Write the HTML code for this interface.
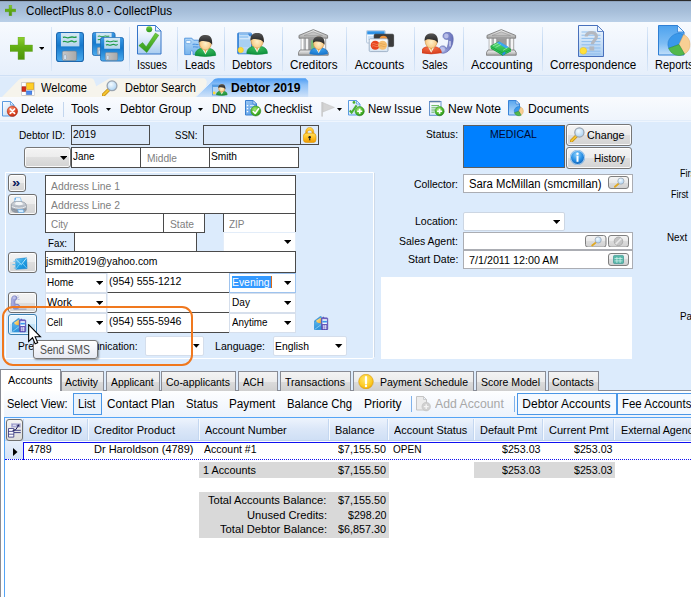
<!DOCTYPE html>
<html lang="en"><head><meta charset="utf-8"><title>CollectPlus 8.0 - CollectPlus</title>
<style>
html,body{margin:0;padding:0;}
body{width:691px;height:597px;overflow:hidden;position:relative;background:#fff;font-family:"Liberation Sans", sans-serif;}
#app{position:absolute;left:0;top:0;width:691px;height:597px;overflow:hidden;background:#fff;}
#app div,#app svg{position:absolute;box-sizing:border-box;}
.t{position:absolute;white-space:nowrap;line-height:normal;transform-origin:0 0;font-family:"Liberation Sans", sans-serif;}
</style></head>
<body><div id="app">
<div style="left:0px;top:0px;width:691px;height:22px;background:linear-gradient(#9cb4d1,#a6bed9 50%,#bad0e8);"></div>
<div style="left:0px;top:0px;width:691px;height:1px;background:#2a2a2a;"></div>
<div style="left:0px;top:1px;width:691px;height:1px;background:#6f7f96;opacity:.3"></div>
<svg style="left:5px;top:5px" width="10.8" height="10.8" viewBox="0 0 10.8 10.8"><defs><linearGradient id="g1" x1="0" y1="0" x2="0" y2="1"><stop offset="0" stop-color="#8ed030"/><stop offset="0.45" stop-color="#62ae14"/><stop offset="1" stop-color="#4c940a"/></linearGradient></defs><path d="M4.050000000000001 0H6.750000000000001V4.050000000000001H10.8V6.750000000000001H6.750000000000001V10.8H4.050000000000001V6.750000000000001H0V4.050000000000001H4.050000000000001Z" fill="url(#g1)" stroke="#5a9c1a" stroke-width="0.6" stroke-opacity=".6" stroke-linejoin="round"/></svg>
<span class="t" style="left:26.10px;top:4.00px;font-size:12px;color:#000;transform:scaleX(0.9686);">CollectPlus 8.0 - CollectPlus</span>
<div style="left:0px;top:22px;width:691px;height:53px;background:linear-gradient(#f7fafe,#eff5fd 45%,#e6effb);"></div>
<div style="left:0px;top:75px;width:691px;height:1px;background:#cfe0f5;"></div>
<div style="left:0px;top:76px;width:691px;height:1px;background:#e4eefb;"></div>
<svg style="left:10px;top:37px" width="22.5" height="22.5" viewBox="0 0 22.5 22.5"><defs><linearGradient id="g2" x1="0" y1="0" x2="0" y2="1"><stop offset="0" stop-color="#8ed030"/><stop offset="0.45" stop-color="#62ae14"/><stop offset="1" stop-color="#4c940a"/></linearGradient></defs><path d="M8.05 0H14.450000000000001V8.05H22.5V14.450000000000001H14.450000000000001V22.5H8.05V14.450000000000001H0V8.05H8.05Z" fill="url(#g2)" stroke="#5a9c1a" stroke-width="0.6" stroke-opacity=".6" stroke-linejoin="round"/></svg>
<svg style="left:38.8px;top:47px" width="5.6" height="3" viewBox="0 0 5.6 3"><path d="M0 0H5.6L2.8 3Z" fill="#000"/></svg>
<div style="left:51px;top:27px;width:1px;height:44px;background:linear-gradient(#dbe8f8,#bcd4f0 50%,#dbe8f8);"></div>
<div style="left:129px;top:27px;width:1px;height:44px;background:linear-gradient(#dbe8f8,#bcd4f0 50%,#dbe8f8);"></div>
<div style="left:177px;top:27px;width:1px;height:44px;background:linear-gradient(#dbe8f8,#bcd4f0 50%,#dbe8f8);"></div>
<div style="left:224px;top:27px;width:1px;height:44px;background:linear-gradient(#dbe8f8,#bcd4f0 50%,#dbe8f8);"></div>
<div style="left:282px;top:27px;width:1px;height:44px;background:linear-gradient(#dbe8f8,#bcd4f0 50%,#dbe8f8);"></div>
<div style="left:346px;top:27px;width:1px;height:44px;background:linear-gradient(#dbe8f8,#bcd4f0 50%,#dbe8f8);"></div>
<div style="left:414px;top:27px;width:1px;height:44px;background:linear-gradient(#dbe8f8,#bcd4f0 50%,#dbe8f8);"></div>
<div style="left:463px;top:27px;width:1px;height:44px;background:linear-gradient(#dbe8f8,#bcd4f0 50%,#dbe8f8);"></div>
<div style="left:542px;top:27px;width:1px;height:44px;background:linear-gradient(#dbe8f8,#bcd4f0 50%,#dbe8f8);"></div>
<div style="left:647px;top:27px;width:1px;height:44px;background:linear-gradient(#dbe8f8,#bcd4f0 50%,#dbe8f8);"></div>
<svg style="left:56px;top:32px" width="28" height="30" viewBox="0 0 28 30"><defs><linearGradient id="g3" x1="0" y1="0" x2="0" y2="1"><stop offset="0" stop-color="#3b9ae6"/><stop offset="0.45" stop-color="#1478cc"/><stop offset="1" stop-color="#4cacee"/></linearGradient><linearGradient id="g4" x1="0" y1="0" x2="0" y2="1"><stop offset="0" stop-color="#d6e8f4"/><stop offset="1" stop-color="#b6d6ec"/></linearGradient><linearGradient id="g5" x1="0" y1="0" x2="1" y2="0"><stop offset="0" stop-color="#c8c8c8"/><stop offset="1" stop-color="#a8a8a8"/></linearGradient></defs><g transform="scale(0.9824561403508771,1.0135135135135134)"><rect x=".5" y=".5" width="27.5" height="28.6" rx="2.8" fill="url(#g3)" stroke="#1a66ae" stroke-width="1"/><rect x="5" y="1" width="18.8" height="13.2" fill="url(#g4)"/><path d="M7 5.4q2-.8 3.5 0t3.500 0t3.500-.3t3.500-.3" stroke="#1e9a48" stroke-width="1.3" fill="none"/><path d="M7 9.6q2-.8 3.5 0t3.500-.2t3.500 0t3.500-.5" stroke="#1e9a48" stroke-width="1.3" fill="none"/><rect x="6.4" y="18.8" width="14.6" height="9.4" rx="1.6" fill="url(#g5)" stroke="#6f7f90" stroke-width=".6"/><rect x="8" y="22.4" width="2.5" height="4.8" rx="1" fill="#dceaf8" stroke="#7f93ad" stroke-width=".5"/></g></svg>
<svg style="left:92px;top:32px" width="23.5" height="24" viewBox="0 0 23.5 24"><defs><linearGradient id="g6" x1="0" y1="0" x2="0" y2="1"><stop offset="0" stop-color="#3b9ae6"/><stop offset="0.45" stop-color="#1478cc"/><stop offset="1" stop-color="#4cacee"/></linearGradient><linearGradient id="g7" x1="0" y1="0" x2="0" y2="1"><stop offset="0" stop-color="#d6e8f4"/><stop offset="1" stop-color="#b6d6ec"/></linearGradient><linearGradient id="g8" x1="0" y1="0" x2="1" y2="0"><stop offset="0" stop-color="#c8c8c8"/><stop offset="1" stop-color="#a8a8a8"/></linearGradient></defs><g transform="scale(0.8245614035087719,0.8108108108108107)"><rect x=".5" y=".5" width="27.5" height="28.6" rx="2.8" fill="url(#g6)" stroke="#1a66ae" stroke-width="1"/><rect x="5" y="1" width="18.8" height="13.2" fill="url(#g7)"/><path d="M7 5.4q2-.8 3.5 0t3.500 0t3.500-.3t3.500-.3" stroke="#1e9a48" stroke-width="1.3" fill="none"/><path d="M7 9.6q2-.8 3.5 0t3.500-.2t3.500 0t3.500-.5" stroke="#1e9a48" stroke-width="1.3" fill="none"/><rect x="6.4" y="18.8" width="14.6" height="9.4" rx="1.6" fill="url(#g8)" stroke="#6f7f90" stroke-width=".6"/><rect x="8" y="22.4" width="2.5" height="4.8" rx="1" fill="#dceaf8" stroke="#7f93ad" stroke-width=".5"/></g></svg>
<svg style="left:99.5px;top:37.3px" width="24" height="24.5" viewBox="0 0 24 24.5"><defs><linearGradient id="g9" x1="0" y1="0" x2="0" y2="1"><stop offset="0" stop-color="#3b9ae6"/><stop offset="0.45" stop-color="#1478cc"/><stop offset="1" stop-color="#4cacee"/></linearGradient><linearGradient id="g10" x1="0" y1="0" x2="0" y2="1"><stop offset="0" stop-color="#d6e8f4"/><stop offset="1" stop-color="#b6d6ec"/></linearGradient><linearGradient id="g11" x1="0" y1="0" x2="1" y2="0"><stop offset="0" stop-color="#c8c8c8"/><stop offset="1" stop-color="#a8a8a8"/></linearGradient></defs><g transform="scale(0.8421052631578947,0.8277027027027026)"><rect x=".5" y=".5" width="27.5" height="28.6" rx="2.8" fill="url(#g9)" stroke="#1a66ae" stroke-width="1"/><rect x="5" y="1" width="18.8" height="13.2" fill="url(#g10)"/><path d="M7 5.4q2-.8 3.5 0t3.500 0t3.500-.3t3.500-.3" stroke="#1e9a48" stroke-width="1.3" fill="none"/><path d="M7 9.6q2-.8 3.5 0t3.500-.2t3.500 0t3.500-.5" stroke="#1e9a48" stroke-width="1.3" fill="none"/><rect x="6.4" y="18.8" width="14.6" height="9.4" rx="1.6" fill="url(#g11)" stroke="#6f7f90" stroke-width=".6"/><rect x="8" y="22.4" width="2.5" height="4.8" rx="1" fill="#dceaf8" stroke="#7f93ad" stroke-width=".5"/></g></svg>
<svg style="left:137px;top:25px" width="24.5" height="29.5" viewBox="0 0 24.5 29.5"><defs><linearGradient id="g12" x1="0" y1="0" x2="0" y2="1"><stop offset="0" stop-color="#ffffff"/><stop offset="0.4" stop-color="#e4effb"/><stop offset="1" stop-color="#a8ccf0"/></linearGradient><linearGradient id="g13" x1="0" y1="0" x2="0" y2="1"><stop offset="0" stop-color="#72cc3c"/><stop offset="1" stop-color="#2c981c"/></linearGradient></defs><path d="M.5 .5H18.5L24.0 6V29.0H.5Z" fill="url(#g12)" stroke="#3474c8" stroke-width="1" stroke-linejoin="round"/><path d="M18.5 .5V6H24.0Z" fill="#eaf4ff" stroke="#3474c8" stroke-width=".8" stroke-linejoin="round"/><circle cx="12.2" cy="4.2" r="3" fill="url(#g13)"/><path d="M1.800 20.600L5.600 17.600L9.200 21.800L18.400 8L21.800 10.200L9.800 27.600Z" fill="url(#g13)" stroke="#2a8a1a" stroke-width=".4"/></svg>
<svg style="left:184px;top:34px" width="33" height="23" viewBox="0 0 33 23"><defs><linearGradient id="g14" x1="0" y1="0" x2="0" y2="1"><stop offset="0" stop-color="#b4d8f8"/><stop offset="1" stop-color="#78b4ec"/></linearGradient></defs><path d="M.7 4.2H7.8L9.6 6.2H16V20.6H9V17.4Q7.800 15.800 6.600 17.400V20.600H.700Z" fill="url(#g14)" stroke="#4a90dc" stroke-width=".9" stroke-linejoin="round"/><rect x="1.900" y="6.400" width="5" height="3.200" rx="1.200" fill="#f0f8ff" stroke="#5a9ce0" stroke-width=".7"/><path d="M8.600 10.400c2-.6 4 .4 6 0M9 13c2-.6 3.500 .4 5.500 0" stroke="#3c88dc" stroke-width=".9" fill="none"/><defs><radialGradient id="g15" cx="0.5" cy="0.55" r="0.6"><stop offset="0" stop-color="#fff0c8"/><stop offset="0.6" stop-color="#fad294"/><stop offset="1" stop-color="#e8aa58"/></radialGradient><radialGradient id="g16" cx="0.5" cy="0.2" r="0.9"><stop offset="0" stop-color="#3cc060"/><stop offset="1" stop-color="#0a8a38"/></radialGradient><linearGradient id="g17" x1="0" y1="0" x2="0" y2="1"><stop offset="0" stop-color="#555"/><stop offset="1" stop-color="#1c1c1c"/></linearGradient></defs><path d="M11.10 21.40C11.10 16.20 15.01 14.00 21.40 14.00C27.79 14.00 31.70 16.20 31.70 21.40Q21.40 23.60 11.10 21.40Z" fill="url(#g16)" stroke="#0a8a38" stroke-width=".6"/><path d="M18.00 14.40L21.40 20.60L24.80 14.40Z" fill="#f4f8f0"/><path d="M20.10 14.60L21.40 19.60L22.70 14.60Z" fill="#f4b050"/><ellipse cx="21.40" cy="8.80" rx="6.14" ry="7.30" fill="url(#g15)" stroke="#c88a40" stroke-width=".5"/><path d="M14.74 8.70C14.44 2.20 18.20 0.90 21.80 1.00C26.20 1.00 28.58 3.60 28.18 10.70C26.78 8.30 24.28 7.20 19.48 6.90C16.92 6.90 15.54 7.50 14.74 8.70Z" fill="url(#g17)"/></svg>
<svg style="left:237px;top:32px" width="32" height="24" viewBox="0 0 32 24"><defs><linearGradient id="g18" x1="0" y1="0" x2="0" y2="1"><stop offset="0" stop-color="#e4f0fc"/><stop offset="1" stop-color="#a4cef4"/></linearGradient></defs><rect x=".700" y="1" width="13.800" height="20.800" rx=".800" fill="url(#g18)" stroke="#3f88d8" stroke-width="1"/><rect x=".700" y="1" width="1.400" height="20.800" fill="#3f88d8"/><path d="M2.400 2.800h9M2.400 5h9" stroke="#6cb0ee" stroke-width="1.100"/><rect x="2.400" y="7.400" width="11" height="7.600" fill="#a8d0f2"/><path d="M11 1.400Q11.400 4.400 14.200 4.600V1.400Z" fill="#3f88d8"/><circle cx="3.700" cy="18" r="2.700" fill="#ffdc3c" stroke="#ecc020" stroke-width=".5"/><defs><radialGradient id="g19" cx="0.5" cy="0.55" r="0.6"><stop offset="0" stop-color="#fff0c8"/><stop offset="0.6" stop-color="#fad294"/><stop offset="1" stop-color="#e8aa58"/></radialGradient><radialGradient id="g20" cx="0.5" cy="0.2" r="0.9"><stop offset="0" stop-color="#3cc060"/><stop offset="1" stop-color="#0a8a38"/></radialGradient><linearGradient id="g21" x1="0" y1="0" x2="0" y2="1"><stop offset="0" stop-color="#555"/><stop offset="1" stop-color="#1c1c1c"/></linearGradient></defs><path d="M9.80 21.40C9.80 16.20 13.71 14.00 20.10 14.00C26.49 14.00 30.40 16.20 30.40 21.40Q20.10 23.60 9.80 21.40Z" fill="url(#g20)" stroke="#0a8a38" stroke-width=".6"/><path d="M16.70 14.40L20.10 20.60L23.50 14.40Z" fill="#f4f8f0"/><path d="M18.80 14.60L20.10 19.60L21.40 14.60Z" fill="#f4b050"/><ellipse cx="20.10" cy="8.80" rx="6.14" ry="7.30" fill="url(#g19)" stroke="#c88a40" stroke-width=".5"/><path d="M13.44 8.70C13.14 2.20 16.90 0.90 20.50 1.00C24.90 1.00 27.28 3.60 26.88 10.70C25.48 8.30 22.98 7.20 18.18 6.90C15.62 6.90 14.24 7.50 13.44 8.70Z" fill="url(#g21)"/></svg>
<svg style="left:298px;top:28.5px" width="31" height="27.5" viewBox="0 0 31 27.5"><defs><linearGradient id="g22" x1="0" y1="0" x2="0" y2="1"><stop offset="0" stop-color="#f2f2f2"/><stop offset="1" stop-color="#a8a8a8"/></linearGradient><linearGradient id="g23" x1="0" y1="0" x2="1" y2="0"><stop offset="0" stop-color="#e8e8e8"/><stop offset="0.5" stop-color="#ffffff"/><stop offset="1" stop-color="#b0b0b0"/></linearGradient></defs><path d="M15.3 .6L29.6 6.4V9.2H1V6.4Z" fill="url(#g22)" stroke="#7c7c7c" stroke-width=".9" stroke-linejoin="round"/><path d="M15.3 2.8L24.5 6.6H6.1Z" fill="#c4c4c4" stroke="#8c8c8c" stroke-width=".5"/><rect x="7.5" y="9.4" width="16" height="11.6" fill="#9a9a9a"/><rect x="3.0" y="9.4" width="3.3" height="11.8" fill="url(#g23)" stroke="#8a8a8a" stroke-width=".5"/><rect x="7.6" y="9.4" width="3.3" height="11.8" fill="url(#g23)" stroke="#8a8a8a" stroke-width=".5"/><rect x="20.2" y="9.4" width="3.3" height="11.8" fill="url(#g23)" stroke="#8a8a8a" stroke-width=".5"/><rect x="24.6" y="9.4" width="3.3" height="11.8" fill="url(#g23)" stroke="#8a8a8a" stroke-width=".5"/><path d="M2 21h26.6l1.6 2.6v2.6H.4v-2.6Z" fill="url(#g22)" stroke="#7c7c7c" stroke-width=".9" stroke-linejoin="round"/><rect x="13.200" y="11.400" width="3" height="9.600" fill="#78c078"/><defs><radialGradient id="g24" cx="0.5" cy="0.55" r="0.6"><stop offset="0" stop-color="#fff0c8"/><stop offset="0.6" stop-color="#fad294"/><stop offset="1" stop-color="#e8aa58"/></radialGradient><radialGradient id="g25" cx="0.5" cy="0.2" r="0.9"><stop offset="0" stop-color="#3ca4f0"/><stop offset="1" stop-color="#1470c8"/></radialGradient><linearGradient id="g26" x1="0" y1="0" x2="0" y2="1"><stop offset="0" stop-color="#555"/><stop offset="1" stop-color="#1c1c1c"/></linearGradient></defs><path d="M11.84 24.87C11.84 20.57 15.21 18.68 20.70 18.68C26.19 18.68 29.56 20.57 29.56 24.87Q20.70 26.76 11.84 24.87Z" fill="url(#g25)" stroke="#1470c8" stroke-width=".6"/><path d="M17.78 19.02L20.70 24.36L23.62 19.02Z" fill="#f4f8f0"/><path d="M19.58 19.20L20.70 23.50L21.82 19.20Z" fill="#f4b050"/><ellipse cx="20.70" cy="14.21" rx="5.28" ry="6.28" fill="url(#g24)" stroke="#c88a40" stroke-width=".5"/><path d="M14.98 14.12C14.72 8.53 17.95 7.41 21.04 7.50C24.83 7.50 26.88 9.74 26.53 15.84C25.33 13.78 23.18 12.83 19.05 12.57C16.85 12.57 15.66 13.09 14.98 14.12Z" fill="url(#g26)"/></svg>
<svg style="left:366px;top:30px" width="28.5" height="22.5" viewBox="0 0 28.5 22.5"><defs><linearGradient id="g27" x1="0" y1="0" x2="0" y2="1"><stop offset="0" stop-color="#ffffff"/><stop offset="1" stop-color="#d6e4f2"/></linearGradient></defs><rect x=".6" y=".4" width="18.6" height="12.6" rx="1" fill="#f4f9ff" stroke="#9fb6d0" stroke-width=".7"/><rect x="1.2" y="1.2" width="17.4" height="3.2" fill="#2f92e6"/><path d="M2 7h8M2 9h6" stroke="#9cc4ec" stroke-width=".9"/><rect x="8.2" y="4.2" width="19.4" height="12.4" rx="1.2" fill="#3c3c3c" stroke="#222" stroke-width=".6"/><circle cx="17.4" cy="9.8" r="4" fill="#f0923a"/><rect x="3.2" y="8.8" width="18.8" height="12.8" rx="1.2" fill="url(#g27)" stroke="#8fa4bc" stroke-width=".8"/><circle cx="9.2" cy="15.2" r="4.5" fill="#e8451e"/><circle cx="16.6" cy="15.2" r="4.5" fill="#f6bf72"/><path d="M6 14q1.6-1 3.200 0t3.200 0M6 16.200q1.600-1 3.200 0t3.200 0" stroke="#f8a080" stroke-width=".6" fill="none"/><path d="M13.400 14q1.600-1 3.200 0t3.200 0M13.400 16.200q1.600-1 3.200 0t3.200 0" stroke="#e09a40" stroke-width=".6" fill="none"/></svg>
<svg style="left:422px;top:31.5px" width="33" height="23" viewBox="0 0 33 23"><defs><linearGradient id="g28" x1="0" y1="0" x2="1" y2="0"><stop offset="0" stop-color="#a4aee0"/><stop offset="0.5" stop-color="#8c96d4"/><stop offset="1" stop-color="#6670b8"/></linearGradient></defs><path d="M23.600 .6C27.600 -.6 31.400 1.600 31.200 7.500C31 13.500 27.800 19.600 22.600 21C18.800 22 16.600 19.600 17 17.200C17.400 14.600 19.800 13.200 22.400 14.200C24.600 15.200 24.200 17.200 24.600 16.600C26 13.800 26.800 9.800 26.600 7C25.400 8 21.400 7.600 21 4.600C20.800 2.600 22 1 23.600 .6Z" fill="url(#g28)" stroke="#5660a8" stroke-width=".6"/><circle cx="24.400" cy="4" r="2.200" fill="#c4c8ec" opacity=".8"/><circle cx="20.600" cy="17.400" r="2.400" fill="#c4c8ec" opacity=".8"/><path d="M28 9.500V14" stroke="#dfe2f6" stroke-width="1.200" stroke-linecap="round"/><defs><radialGradient id="g29" cx="0.5" cy="0.55" r="0.6"><stop offset="0" stop-color="#fff0c8"/><stop offset="0.6" stop-color="#fad294"/><stop offset="1" stop-color="#e8aa58"/></radialGradient><radialGradient id="g30" cx="0.5" cy="0.2" r="0.9"><stop offset="0" stop-color="#f87048"/><stop offset="1" stop-color="#d03818"/></radialGradient><linearGradient id="g31" x1="0" y1="0" x2="0" y2="1"><stop offset="0" stop-color="#555"/><stop offset="1" stop-color="#1c1c1c"/></linearGradient></defs><path d="M-0.95 20.81C-0.95 16.47 2.91 14.30 9.20 14.30C15.49 14.30 19.35 16.47 19.35 20.81Q9.20 22.97 -0.95 20.81Z" fill="url(#g30)" stroke="#d03818" stroke-width=".6"/><path d="M5.85 14.70L9.20 20.81L12.55 14.70Z" fill="#f4f8f0"/><path d="M7.92 14.90L9.20 19.82L10.48 14.90Z" fill="#f4b050"/><ellipse cx="9.20" cy="9.18" rx="6.05" ry="7.19" fill="url(#g29)" stroke="#c88a40" stroke-width=".5"/><path d="M2.64 9.08C2.35 2.68 6.05 1.40 9.59 1.50C13.93 1.50 16.28 4.06 15.88 11.05C14.50 8.69 12.04 7.61 7.31 7.31C4.79 7.31 3.43 7.90 2.64 9.08Z" fill="url(#g31)"/></svg>
<svg style="left:486px;top:28.5px" width="31" height="27.5" viewBox="0 0 31 27.5"><defs><linearGradient id="g33" x1="0" y1="0" x2="0" y2="1"><stop offset="0" stop-color="#f2f2f2"/><stop offset="1" stop-color="#a8a8a8"/></linearGradient><linearGradient id="g34" x1="0" y1="0" x2="1" y2="0"><stop offset="0" stop-color="#e8e8e8"/><stop offset="0.5" stop-color="#ffffff"/><stop offset="1" stop-color="#b0b0b0"/></linearGradient></defs><path d="M15.3 .6L29.6 6.4V9.2H1V6.4Z" fill="url(#g33)" stroke="#7c7c7c" stroke-width=".9" stroke-linejoin="round"/><path d="M15.3 2.8L24.5 6.6H6.1Z" fill="#c4c4c4" stroke="#8c8c8c" stroke-width=".5"/><rect x="7.5" y="9.4" width="16" height="11.6" fill="#9a9a9a"/><rect x="3.0" y="9.4" width="3.3" height="11.8" fill="url(#g34)" stroke="#8a8a8a" stroke-width=".5"/><rect x="7.6" y="9.4" width="3.3" height="11.8" fill="url(#g34)" stroke="#8a8a8a" stroke-width=".5"/><rect x="20.2" y="9.4" width="3.3" height="11.8" fill="url(#g34)" stroke="#8a8a8a" stroke-width=".5"/><rect x="24.6" y="9.4" width="3.3" height="11.8" fill="url(#g34)" stroke="#8a8a8a" stroke-width=".5"/><path d="M2 21h26.6l1.6 2.6v2.6H.4v-2.6Z" fill="url(#g33)" stroke="#7c7c7c" stroke-width=".9" stroke-linejoin="round"/><defs><linearGradient id="g32" x1="0" y1="0" x2="0" y2="1"><stop offset="0" stop-color="#58dc74"/><stop offset="1" stop-color="#14a83c"/></linearGradient></defs><path d="M4.600 17L12.600 12.800L25 20.200L16.600 26.400Z" fill="url(#g32)" stroke="#0f8c30" stroke-width=".5"/><path d="M4.600 17V19.400L16.600 26.400L25 22.400V20.200L16.600 24Z" fill="#12a03a"/><path d="M4.600 18.200L16.600 25.200L25 21.300" fill="none" stroke="#5ae07a" stroke-width=".5"/><path d="M10.800 13.800L13.400 12.600L22.600 18L20.200 19.600Z" fill="#3aa6f4"/><path d="M16.400 24L19.400 22.600V24.900L16.400 26.400Z" fill="#2a8ee4"/><path d="M7 16.800L12.400 14.200M9.500 18.400L14.800 15.600M17 21.400L21.500 18.800" stroke="#b8f4c4" stroke-width=".6"/></svg>
<svg style="left:578px;top:25px" width="26" height="32" viewBox="0 0 26 32"><defs><linearGradient id="g35" x1="0" y1="0" x2="0" y2="1"><stop offset="0" stop-color="#f2f8fe"/><stop offset="1" stop-color="#a9cdf2"/></linearGradient></defs><path d="M.5 .5H19.5L25.5 6.5V31.5H.5Z" fill="url(#g35)" stroke="#4870bc" stroke-width="1" stroke-linejoin="round"/><path d="M19.5 .5V6.5H25.5Z" fill="#eaf4ff" stroke="#4870bc" stroke-width=".8" stroke-linejoin="round"/><path d="M3.500 7H18M3.500 10.200H22.500M3.500 13.400H22.500M3.500 16.600H22.500M3.500 19.800H22.500M3.500 23H22.500M3.500 26.200H22.500M3.500 29H22.500" stroke="#8fbdec" stroke-width="1"/><path d="M8.200 11.400C8.200 6.400 18.400 6.400 18.400 11.600C18.400 15.200 14.400 15.400 14.400 19.200" stroke="#b4b8c0" stroke-width="3.200" fill="none"/><rect x="11.400" y="21.400" width="4.800" height="4.200" fill="#b4b8c0"/><circle cx="5.300" cy="25.800" r="3.400" fill="#ffe03a" stroke="#e8c020" stroke-width=".5"/></svg>
<svg style="left:658px;top:25px" width="33" height="32" viewBox="0 0 33 32"><defs><linearGradient id="g36" x1="0" y1="0" x2="0" y2="1"><stop offset="0" stop-color="#4da2ee"/><stop offset="0.6" stop-color="#7cbcf4"/><stop offset="1" stop-color="#c2dffa"/></linearGradient></defs><path d="M.5 .5H19.5L26.0 7V30.0H.5Z" fill="url(#g36)" stroke="#2f7fd4" stroke-width="1" stroke-linejoin="round"/><path d="M19.5 .5V7H26.0Z" fill="#eaf4ff" stroke="#2f7fd4" stroke-width=".8" stroke-linejoin="round"/><path d="M21 19.5L10.66 23.26A11 11 0 0 1 25.65 9.53Z" fill="#3a98ea" stroke="#1f78cc" stroke-width=".5"/><path d="M21 19.5L25.65 9.53A11 11 0 0 1 26.50 29.03Z" fill="#f8cf94" stroke="#e0a860" stroke-width=".5"/><path d="M21 19.5L26.50 29.03A11 11 0 0 1 10.66 23.26Z" fill="#52b84c" stroke="#2c8c30" stroke-width=".5"/></svg>
<span class="t" style="left:136.60px;top:58.00px;font-size:12px;color:#000;transform:scaleX(0.8650);">Issues</span>
<span class="t" style="left:184.60px;top:58.00px;font-size:12px;color:#000;transform:scaleX(0.9176);">Leads</span>
<span class="t" style="left:231.85px;top:58.00px;font-size:12px;color:#000;transform:scaleX(0.9520);">Debtors</span>
<span class="t" style="left:289.60px;top:58.00px;font-size:12px;color:#000;transform:scaleX(0.9758);">Creditors</span>
<span class="t" style="left:354.85px;top:58.00px;font-size:12px;color:#000;">Accounts</span>
<span class="t" style="left:421.85px;top:58.00px;font-size:12px;color:#000;transform:scaleX(0.8495);">Sales</span>
<span class="t" style="left:470.60px;top:58.00px;font-size:12px;color:#000;transform:scaleX(1.0400);">Accounting</span>
<span class="t" style="left:550.35px;top:58.00px;font-size:12px;color:#000;transform:scaleX(0.9721);">Correspondence</span>
<span class="t" style="left:654.85px;top:58.00px;font-size:12px;color:#000;transform:scaleX(0.9163);">Reports</span>
<div style="left:0px;top:77px;width:691px;height:20px;background:#ddebfb;"></div>
<svg style="left:0;top:77px" width="330" height="20" viewBox="0 77 330 20"><defs><linearGradient id="seltab" x1="0" y1="0" x2="0" y2="1"><stop offset="0" stop-color="#4c9df5"/><stop offset=".35" stop-color="#8dc0f7"/><stop offset="1" stop-color="#cfe2f9"/></linearGradient></defs><path d="M2 97 L18.5 80 Q20 78.3 23 78.3 L91 78.3 Q93.4 78.3 94.2 80.5 L96.4 86.5 L100 97 Z" fill="#f6f4ec"/><path d="M90 97 L96.2 86.2 L108 79.3 Q109.600 78.3 112 78.3 L204 78.3 Q206 78.6 206.800 81.5 L205 97 Z" fill="#f6f4ec"/><path d="M195.5 97 L213 80 Q214.800 78.3 218 78.3 L305.600 78.3 L308.200 81 V97 Z" fill="url(#seltab)"/><path d="M196.200 96.500 L213.400 79.800" stroke="#eef6ff" stroke-width="1" fill="none" opacity=".8"/></svg>
<svg style="left:20.5px;top:81.5px" width="14" height="14" viewBox="0 0 14 14"><rect x=".3" y=".3" width="13.400" height="13.200" rx="1" fill="#e4e4e4" stroke="#b8b8b8" stroke-width=".6"/><rect x="1" y="1" width="3.400" height="3.200" fill="#fff"/><rect x="1" y="10" width="3.400" height="3" fill="#fff"/><rect x="11" y="9.500" width="2.200" height="3.400" fill="#fff"/><rect x="5.700" y="1" width="7" height="6.400" fill="#ffcf24" stroke="#d89a10" stroke-width=".6"/><rect x="1" y="4.800" width="3.800" height="4.600" fill="#d42a1a" stroke="#a01808" stroke-width=".5"/><rect x="5.600" y="9" width="5.200" height="3.400" fill="#4a8af0" stroke="#2a62c8" stroke-width=".5"/></svg>
<svg style="left:101.6px;top:79.6px" width="16" height="16" viewBox="0 0 16 16"><defs><radialGradient id="g37" cx="0.4" cy="0.35" r="0.7"><stop offset="0" stop-color="#f4fbff"/><stop offset="1" stop-color="#a8d0f2"/></radialGradient></defs><g transform="scale(1.0)"><path d="M7.200 9.200L1.600 14.800" stroke="#c08a10" stroke-width="3.600" stroke-linecap="round"/><path d="M7.200 9.200L1.600 14.800" stroke="#f4c430" stroke-width="2.200" stroke-linecap="round"/><circle cx="10" cy="5.800" r="4.900" fill="url(#g37)" stroke="#9aa4b0" stroke-width="1.300"/></g></svg>
<svg style="left:212px;top:83.5px" width="16" height="12" viewBox="0 0 16 12"><rect x=".4" y="1" width="7" height="10" fill="#b4d6f6" stroke="#4a90d8" stroke-width=".7"/><rect x=".8" y="1.300" width="6.200" height="1.500" fill="#3d8fe0"/><circle cx="2.200" cy="9" r="1.400" fill="#ffd93a"/><defs><radialGradient id="g38" cx="0.5" cy="0.55" r="0.6"><stop offset="0" stop-color="#fff0c8"/><stop offset="0.6" stop-color="#fad294"/><stop offset="1" stop-color="#e8aa58"/></radialGradient><radialGradient id="g39" cx="0.5" cy="0.2" r="0.9"><stop offset="0" stop-color="#3fb050"/><stop offset="1" stop-color="#1f8a35"/></radialGradient><linearGradient id="g40" x1="0" y1="0" x2="0" y2="1"><stop offset="0" stop-color="#555"/><stop offset="1" stop-color="#1c1c1c"/></linearGradient></defs><path d="M4.44 10.81C4.44 8.10 6.48 6.96 9.80 6.96C13.12 6.96 15.16 8.10 15.16 10.81Q9.80 11.95 4.44 10.81Z" fill="url(#g39)" stroke="#1f8a35" stroke-width=".6"/><path d="M8.03 7.17L9.80 10.39L11.57 7.17Z" fill="#f4f8f0"/><path d="M9.12 7.27L9.80 9.87L10.48 7.27Z" fill="#f4b050"/><ellipse cx="9.80" cy="4.26" rx="3.19" ry="3.80" fill="url(#g38)" stroke="#c88a40" stroke-width=".5"/><path d="M6.34 4.20C6.18 0.82 8.14 0.15 10.01 0.20C12.30 0.20 13.54 1.55 13.33 5.24C12.60 4.00 11.30 3.42 8.80 3.27C7.47 3.27 6.75 3.58 6.34 4.20Z" fill="url(#g40)"/></svg>
<span class="t" style="left:40.60px;top:80.50px;font-size:12px;color:#000;transform:scaleX(0.9238);">Welcome</span>
<span class="t" style="left:125.10px;top:80.50px;font-size:12px;color:#000;transform:scaleX(0.9150);">Debtor Search</span>
<span class="t" style="left:231.40px;top:80.60px;font-size:12px;color:#000;font-weight:bold;transform:scaleX(1.0103);">Debtor 2019</span>
<div style="left:0px;top:97px;width:691px;height:24px;background:linear-gradient(#f9fbfe,#eef4fc);"></div>
<div style="left:0px;top:120px;width:691px;height:1px;background:#e2edfa;"></div>
<svg style="left:2px;top:101px" width="16.5" height="16.5" viewBox="0 0 16.5 16.5"><defs><linearGradient id="g41" x1="0" y1="0" x2="1" y2="1"><stop offset="0" stop-color="#ffffff"/><stop offset="1" stop-color="#b4d4f4"/></linearGradient></defs><path d="M.5 .5H8.5L12.0 4V15.0H.5Z" fill="url(#g41)" stroke="#5a9ae0" stroke-width="1" stroke-linejoin="round"/><path d="M8.5 .5V4H12.0Z" fill="#eaf4ff" stroke="#5a9ae0" stroke-width=".8" stroke-linejoin="round"/><defs><radialGradient id="g42" cx="0.4" cy="0.35" r="0.7"><stop offset="0" stop-color="#f8a080"/><stop offset="0.6" stop-color="#e04a28"/><stop offset="1" stop-color="#b82a10"/></radialGradient></defs><circle cx="10.4" cy="10.2" r="5.2" fill="url(#g42)" stroke="#a83018" stroke-width=".5"/><path d="M8.216000000000001 8.015999999999998L12.584 12.384M12.584 8.015999999999998L8.216000000000001 12.384" stroke="#fff" stroke-width="1.700" stroke-linecap="round"/></svg>
<span class="t" style="left:21.20px;top:101.80px;font-size:12px;color:#000;transform:scaleX(0.9398);">Delete</span>
<div style="left:63px;top:102px;width:1px;height:15px;background:#c3d6ee;"></div>
<span class="t" style="left:71.10px;top:101.80px;font-size:12px;color:#000;transform:scaleX(0.9924);">Tools</span>
<svg style="left:106.3px;top:108px" width="5" height="3" viewBox="0 0 5 3"><path d="M0 0H5L2.5 3Z" fill="#000"/></svg>
<span class="t" style="left:120.10px;top:101.80px;font-size:12px;color:#000;transform:scaleX(0.9835);">Debtor Group</span>
<svg style="left:198px;top:108px" width="5" height="3" viewBox="0 0 5 3"><path d="M0 0H5L2.5 3Z" fill="#000"/></svg>
<span class="t" style="left:211.60px;top:101.80px;font-size:12px;color:#000;transform:scaleX(0.9231);">DND</span>
<svg style="left:245px;top:100px" width="16.5" height="16.5" viewBox="0 0 16.5 16.5"><defs><linearGradient id="g43" x1="0" y1="0" x2="1" y2="1"><stop offset="0" stop-color="#9cc8f4"/><stop offset="1" stop-color="#4a94e4"/></linearGradient></defs><path d="M.5 .5H8L11.5 4V15.0H.5Z" fill="url(#g43)" stroke="#3a80d0" stroke-width="1" stroke-linejoin="round"/><path d="M8 .5V4H11.5Z" fill="#eaf4ff" stroke="#3a80d0" stroke-width=".8" stroke-linejoin="round"/><path d="M2.500 5v1.200M2.500 8v1.200M2.500 11v1.200" stroke="#fff" stroke-width="1.400"/><path d="M5 5.600h4M5 8.600h3" stroke="#e4f0fc" stroke-width=".9"/><defs><radialGradient id="g44" cx="0.4" cy="0.35" r="0.7"><stop offset="0" stop-color="#a8e878"/><stop offset="0.6" stop-color="#4cb82c"/><stop offset="1" stop-color="#2a8a18"/></radialGradient></defs><circle cx="10.8" cy="11" r="5" fill="url(#g44)" stroke="#2f8a20" stroke-width=".5"/><path d="M8.3 11.5L10.200000000000001 13.5L13.55 8.75" stroke="#fff" stroke-width="1.600" fill="none" stroke-linecap="round" stroke-linejoin="round"/></svg>
<span class="t" style="left:263.60px;top:101.80px;font-size:12px;color:#000;transform:scaleX(0.9860);">Checklist</span>
<svg style="left:321px;top:102px" width="14" height="15" viewBox="0 0 14 15"><rect x=".4" y="0" width="1.400" height="14.600" fill="#c4c4c4"/><path d="M1.800 .6L13.400 5.400L1.800 10Z" fill="#d4d4d4" stroke="#c0c0c0" stroke-width=".5"/></svg>
<svg style="left:336.5px;top:108px" width="5" height="3" viewBox="0 0 5 3"><path d="M0 0H5L2.5 3Z" fill="#000"/></svg>
<svg style="left:348px;top:100px" width="17" height="16.5" viewBox="0 0 17 16.5"><defs><linearGradient id="g45" x1="0" y1="0" x2="1" y2="1"><stop offset="0" stop-color="#ffffff"/><stop offset="1" stop-color="#b8d8f6"/></linearGradient></defs><path d="M.5 .5H8.5L12.0 4V15.0H.5Z" fill="url(#g45)" stroke="#5a9ae0" stroke-width="1" stroke-linejoin="round"/><path d="M8.5 .5V4H12.0Z" fill="#eaf4ff" stroke="#5a9ae0" stroke-width=".8" stroke-linejoin="round"/><circle cx="6" cy="2.400" r="1.400" fill="#48b030"/><path d="M1.800 10.500L3.600 12.600L8.600 5.400" stroke="#48b030" stroke-width="2" fill="none"/><defs><radialGradient id="g46" cx="0.4" cy="0.35" r="0.7"><stop offset="0" stop-color="#a8e878"/><stop offset="0.6" stop-color="#4cb82c"/><stop offset="1" stop-color="#2a8a18"/></radialGradient></defs><circle cx="11.7" cy="11.2" r="4.6" fill="url(#g46)" stroke="#2f8a20" stroke-width=".5"/><path d="M9.17 11.2H14.229999999999999M11.7 8.67V13.729999999999999" stroke="#fff" stroke-width="1.600"/></svg>
<span class="t" style="left:367.60px;top:101.80px;font-size:12px;color:#000;transform:scaleX(0.9550);">New Issue</span>
<svg style="left:429px;top:100px" width="16" height="16.5" viewBox="0 0 16 16.5"><defs><linearGradient id="g47" x1="0" y1="0" x2="0" y2="1"><stop offset="0" stop-color="#ffffff"/><stop offset="1" stop-color="#d4e6f8"/></linearGradient></defs><rect x=".5" y="1.500" width="11.500" height="13.800" fill="url(#g47)" stroke="#5a8ac8" stroke-width=".9"/><path d="M2 .6v2M4 .6v2M6 .6v2M8 .6v2M10 .6v2" stroke="#4a5a70" stroke-width=".8"/><path d="M2.400 5.600h7.600M2.400 7.800h7.600M2.400 10h4M2.400 12.200h3" stroke="#58b048" stroke-width=".9"/><defs><radialGradient id="g48" cx="0.4" cy="0.35" r="0.7"><stop offset="0" stop-color="#a8e878"/><stop offset="0.6" stop-color="#4cb82c"/><stop offset="1" stop-color="#2a8a18"/></radialGradient></defs><circle cx="10.6" cy="11.2" r="4.6" fill="url(#g48)" stroke="#2f8a20" stroke-width=".5"/><path d="M8.07 11.2H13.129999999999999M10.6 8.67V13.729999999999999" stroke="#fff" stroke-width="1.600"/></svg>
<span class="t" style="left:447.60px;top:101.80px;font-size:12px;color:#000;transform:scaleX(1.0059);">New Note</span>
<svg style="left:508px;top:100px" width="16" height="16.5" viewBox="0 0 16 16.5"><defs><linearGradient id="g49" x1="0" y1="0" x2="0" y2="1"><stop offset="0" stop-color="#58a6ee"/><stop offset="1" stop-color="#bcdcfa"/></linearGradient></defs><path d="M.5 .5H8L11.5 4V15.0H.5Z" fill="url(#g49)" stroke="#3a84d8" stroke-width="1" stroke-linejoin="round"/><path d="M8 .5V4H11.5Z" fill="#eaf4ff" stroke="#3a84d8" stroke-width=".8" stroke-linejoin="round"/><path d="M10.8 11.2L6.48 12.77A4.6 4.6 0 0 1 12.74 7.03Z" fill="#3a98ea" stroke="#1f78cc" stroke-width=".5"/><path d="M10.8 11.2L12.74 7.03A4.6 4.6 0 0 1 13.10 15.18Z" fill="#f8cf94" stroke="#e0a860" stroke-width=".5"/><path d="M10.8 11.2L13.10 15.18A4.6 4.6 0 0 1 6.48 12.77Z" fill="#52b84c" stroke="#2c8c30" stroke-width=".5"/></svg>
<span class="t" style="left:527.60px;top:101.80px;font-size:12px;color:#000;transform:scaleX(1.0051);">Documents</span>
<div style="left:0px;top:121px;width:691px;height:270px;background:#dcebfc;"></div>
<div style="left:0px;top:121px;width:691px;height:1px;background:#eef5fe;"></div>
<span class="t" style="left:19.10px;top:128.75px;font-size:11.5px;color:#000;transform:scaleX(0.8777);">Debtor ID:</span>
<div style="left:71px;top:125px;width:79px;height:20px;background:#dbe9fa;border:1px solid #4a4a4a;"></div>
<span class="t" style="left:72.60px;top:128.00px;font-size:11.5px;color:#000;transform:scaleX(0.8990);">2019</span>
<span class="t" style="left:174.60px;top:128.75px;font-size:11.5px;color:#000;transform:scaleX(0.8383);">SSN:</span>
<div style="left:203px;top:125px;width:98px;height:20px;background:#dbe9fa;border:1px solid #4a4a4a;"></div>
<div style="left:300px;top:125px;width:19px;height:20px;background:#dcebfc;border:1px solid #4a4a4a;"></div>
<svg style="left:303px;top:127px" width="13.5" height="16" viewBox="0 0 13.5 16"><defs><linearGradient id="g50" x1="0" y1="0" x2="0" y2="1"><stop offset="0" stop-color="#ffe060"/><stop offset="0.5" stop-color="#ffc020"/><stop offset="1" stop-color="#ee9800"/></linearGradient></defs><path d="M2.600 6.800V5.200C2.600 -1.200 10.800 -1.200 10.800 5.200V6.800H9V5.400C9 2.600 4.400 2.600 4.400 5.400V6.800Z" fill="url(#g50)" stroke="#d89000" stroke-width=".5"/><rect x=".4" y="6.200" width="12.600" height="9.400" rx="3" fill="url(#g50)" stroke="#dc9400" stroke-width=".6"/><circle cx="6.700" cy="10.200" r="1.300" fill="#222"/><path d="M6.700 10.200L5.900 13.200H7.500Z" fill="#222"/></svg>
<div style="left:24px;top:147px;width:47px;height:21px;background:linear-gradient(#f4f4f4,#ececec 50%,#dfdfdf 50%,#d3d3d3);border:1px solid #777;border-radius:3px;box-shadow:inset 0 0 0 1px rgba(255,255,255,.85);"></div>
<svg style="left:59.8px;top:155.8px" width="7.4" height="4" viewBox="0 0 7.4 4"><path d="M0 0H7.4L3.7 4Z" fill="#000"/></svg>
<div style="left:71px;top:147px;width:70px;height:20.5px;background:#fff;border:1px solid #4a4a4a;"></div>
<span class="t" style="left:72.60px;top:150.00px;font-size:11.5px;color:#000;transform:scaleX(0.8622);">Jane</span>
<div style="left:140px;top:147px;width:69.5px;height:20.5px;background:#fff;border:1px solid #4a4a4a;"></div>
<span class="t" style="left:147.30px;top:152.30px;font-size:11.5px;color:#808080;transform:scaleX(0.8856);">Middle</span>
<div style="left:208.5px;top:147px;width:90px;height:20.5px;background:#fff;border:1px solid #4a4a4a;"></div>
<span class="t" style="left:210.60px;top:150.00px;font-size:11.5px;color:#000;transform:scaleX(0.8845);">Smith</span>
<div style="left:5px;top:172px;width:369px;height:187px;background:#dcebfc;border:1px solid #fff;border-radius:0 0 2px 0;"></div>
<div style="left:374px;top:173px;width:1px;height:184px;background:#cddaea;"></div>
<div style="left:8px;top:174px;width:18px;height:18px;background:linear-gradient(#f3f3f3,#ececec 50%,#dedede 50%,#d4d4d4);border:1px solid #6e6e6e;border-radius:3px;box-shadow:inset 0 0 0 1px rgba(255,255,255,.85);"></div>
<span class="t" style="left:12.40px;top:176.00px;font-size:12px;color:#0c1c5c;font-weight:bold;transform:scaleX(1.2287);">»</span>
<div style="left:8px;top:194px;width:29px;height:21px;background:linear-gradient(#f3f3f3,#ececec 50%,#dedede 50%,#d4d4d4);border:1px solid #6e6e6e;border-radius:3px;box-shadow:inset 0 0 0 1px rgba(255,255,255,.85);"></div>
<svg style="left:10.5px;top:196.5px" width="16" height="16.5" viewBox="0 0 16 16.5"><defs><linearGradient id="g51" x1="0" y1="0" x2="0" y2="1"><stop offset="0" stop-color="#d4d8de"/><stop offset="1" stop-color="#8e96a2"/></linearGradient><linearGradient id="g52" x1="0" y1="0" x2="0" y2="1"><stop offset="0" stop-color="#ffffff"/><stop offset="1" stop-color="#cfe6fa"/></linearGradient></defs><path d="M3.200 6.200L4.200 .700H9.400L11 6.200Z" fill="url(#g52)" stroke="#7ab8ec" stroke-width=".7"/><circle cx="4.300" cy="1.900" r=".7" fill="#2a8ae0"/><path d="M.5 7.600C.5 6 2.500 4.800 4 4.600L10.500 4.600C13 5 15.300 6.400 15.300 8.200V12.800C15.300 13.800 13.500 15.200 11.500 15.400H4.500C2.500 15.200 .5 13.800 .5 12.800Z" fill="url(#g51)" stroke="#7e8692" stroke-width=".6"/><path d="M3.600 7.200L5.200 5H10L12.400 7.200Q8 9.400 3.600 7.200Z" fill="#f4f6f8"/><path d="M.8 9.600Q8 12.800 15 9.600" stroke="#eceff3" stroke-width="1" fill="none"/><path d="M.8 11.800Q8 15 15 11.800" stroke="#747c88" stroke-width=".6" fill="none"/><path d="M6.600 12.600H12.200L13 15.600H7.600Z" fill="#d4ecfe" stroke="#58a8ec" stroke-width=".6"/></svg>
<div style="left:44.5px;top:175px;width:251.5px;height:20px;background:#fff;border:1px solid #4a4a4a;"></div>
<span class="t" style="left:50.60px;top:180.00px;font-size:11.5px;color:#808080;transform:scaleX(0.8994);">Address Line 1</span>
<div style="left:44.5px;top:194px;width:251.5px;height:20px;background:#fff;border:1px solid #4a4a4a;"></div>
<span class="t" style="left:50.60px;top:199.00px;font-size:11.5px;color:#808080;transform:scaleX(0.8994);">Address Line 2</span>
<div style="left:44.5px;top:213px;width:119.5px;height:20px;background:#fff;border:1px solid #4a4a4a;"></div>
<span class="t" style="left:50.60px;top:218.00px;font-size:11.5px;color:#808080;transform:scaleX(0.8584);">City</span>
<div style="left:163px;top:213px;width:42px;height:20px;background:#fff;border:1px solid #4a4a4a;"></div>
<span class="t" style="left:169.60px;top:218.00px;font-size:11.5px;color:#808080;transform:scaleX(0.8938);">State</span>
<div style="left:222.5px;top:213px;width:73.5px;height:19px;background:#fff;border:1px solid #4a4a4a;border-bottom:none;"></div>
<span class="t" style="left:228.60px;top:218.00px;font-size:11.5px;color:#808080;transform:scaleX(0.8664);">ZIP</span>
<span class="t" style="left:47.60px;top:237.00px;font-size:11.5px;color:#000;transform:scaleX(0.8495);">Fax:</span>
<div style="left:74px;top:233px;width:123px;height:19px;background:#fff;border:1px solid #4a4a4a;border-top:none;border-bottom:none"></div>
<div style="left:222.5px;top:231.5px;width:73.5px;height:20px;background:#fff;border:1px solid #e3edf9;"></div>
<svg style="left:283.5px;top:240.3px" width="7.4" height="4" viewBox="0 0 7.4 4"><path d="M0 0H7.4L3.7 4Z" fill="#000"/></svg>
<div style="left:8px;top:252px;width:29px;height:21px;background:linear-gradient(#f3f3f3,#ececec 50%,#dedede 50%,#d4d4d4);border:1px solid #6e6e6e;border-radius:3px;box-shadow:inset 0 0 0 1px rgba(255,255,255,.85);"></div>
<svg style="left:11.5px;top:257px" width="16" height="13" viewBox="0 0 16 13"><defs><linearGradient id="g53" x1="0" y1="0" x2="1" y2="1"><stop offset="0" stop-color="#7fd0f8"/><stop offset="0.5" stop-color="#22a0e4"/><stop offset="1" stop-color="#0c84d4"/></linearGradient></defs><path d="M3.700 2.100L14.600 .8L15.100 11.500L3.900 12.300Z" fill="url(#g53)" stroke="#0c7cc8" stroke-width=".5"/><path d="M3.900 2.300L9.300 7.600L14.500 1" fill="none" stroke="#c4ecff" stroke-width=".9"/><path d="M4 12L8 6.600M14.900 11.300L10.600 6.400" fill="none" stroke="#8cd8fc" stroke-width=".7"/><path d="M1.400 4.300H3.600M.5 7.600H3.600M1.800 11H3.800" stroke="#6cc0f0" stroke-width="1"/></svg>
<div style="left:44.5px;top:251px;width:251.5px;height:22px;background:#fff;border:1px solid #4a4a4a;"></div>
<span class="t" style="left:46.40px;top:255.00px;font-size:11.5px;color:#000;transform:scaleX(0.9025);">jsmith2019@yahoo.com</span>
<div style="left:44.5px;top:272.5px;width:62.5px;height:20px;background:#fff;border:1px solid #d6dfec;"></div>
<span class="t" style="left:47.10px;top:275.70px;font-size:11.5px;color:#000;transform:scaleX(0.8639);">Home</span>
<svg style="left:96px;top:281.2px" width="7.2" height="4" viewBox="0 0 7.2 4"><path d="M0 0H7.2L3.6 4Z" fill="#000"/></svg>
<div style="left:106.5px;top:272.5px;width:123px;height:20.5px;background:#fff;border:1px solid #4a4a4a;border-left:1px solid #e6eef9;border-top:none;"></div>
<span class="t" style="left:108.60px;top:275.20px;font-size:11.5px;color:#000;transform:scaleX(0.9219);">(954) 555-1212</span>
<div style="left:229px;top:272.5px;width:67px;height:20px;background:#fff;border:1px solid #9ec3ee;"></div>
<div style="left:232px;top:275.8px;width:39px;height:12px;background:#3399ff;"></div>
<span class="t" style="left:232.10px;top:275.50px;font-size:11.5px;color:#fff;transform:scaleX(0.9023);">Evening</span>
<div style="left:271px;top:275.8px;width:1px;height:12px;background:#d86a1a;"></div>
<svg style="left:283.5px;top:281.2px" width="7.4" height="4" viewBox="0 0 7.4 4"><path d="M0 0H7.4L3.7 4Z" fill="#000"/></svg>
<div style="left:44.5px;top:292.5px;width:62.5px;height:20px;background:#fff;border:1px solid #d6dfec;"></div>
<span class="t" style="left:47.10px;top:295.70px;font-size:11.5px;color:#000;transform:scaleX(0.9391);">Work</span>
<svg style="left:96px;top:301.2px" width="7.2" height="4" viewBox="0 0 7.2 4"><path d="M0 0H7.2L3.6 4Z" fill="#000"/></svg>
<div style="left:106.5px;top:292.5px;width:123px;height:20.5px;background:#fff;border:1px solid #4a4a4a;border-left:1px solid #e6eef9;border-top:none;"></div>
<div style="left:229px;top:292.5px;width:67px;height:20px;background:#fff;border:1px solid #d6dfec;"></div>
<span class="t" style="left:232.10px;top:295.70px;font-size:11.5px;color:#000;transform:scaleX(0.8802);">Day</span>
<svg style="left:283.5px;top:301.2px" width="7.4" height="4" viewBox="0 0 7.4 4"><path d="M0 0H7.4L3.7 4Z" fill="#000"/></svg>
<div style="left:44.5px;top:312.5px;width:62.5px;height:20px;background:#fff;border:1px solid #d6dfec;"></div>
<span class="t" style="left:47.10px;top:315.70px;font-size:11.5px;color:#000;transform:scaleX(0.7824);">Cell</span>
<svg style="left:96px;top:321.2px" width="7.2" height="4" viewBox="0 0 7.2 4"><path d="M0 0H7.2L3.6 4Z" fill="#000"/></svg>
<div style="left:106.5px;top:312.5px;width:123px;height:20.5px;background:#fff;border:1px solid #4a4a4a;border-left:1px solid #e6eef9;border-top:none;"></div>
<span class="t" style="left:108.60px;top:315.20px;font-size:11.5px;color:#000;transform:scaleX(0.9219);">(954) 555-5946</span>
<div style="left:229px;top:312.5px;width:67px;height:20px;background:#fff;border:1px solid #d6dfec;"></div>
<span class="t" style="left:232.10px;top:315.70px;font-size:11.5px;color:#000;transform:scaleX(0.8546);">Anytime</span>
<svg style="left:283.5px;top:321.2px" width="7.4" height="4" viewBox="0 0 7.4 4"><path d="M0 0H7.4L3.7 4Z" fill="#000"/></svg>
<div style="left:8px;top:292px;width:29px;height:20.5px;background:linear-gradient(#f3f3f3,#ececec 50%,#dedede 50%,#d4d4d4);border:1px solid #6e6e6e;border-radius:3px;box-shadow:inset 0 0 0 1px rgba(255,255,255,.85);"></div>
<svg style="left:11px;top:295px" width="16" height="15.5" viewBox="0 0 16 15.5"><defs><linearGradient id="g54" x1="0" y1="0" x2="1" y2="0"><stop offset="0" stop-color="#b4b8e4"/><stop offset="0.5" stop-color="#8c92d2"/><stop offset="1" stop-color="#6c72b8"/></linearGradient></defs><path d="M1.600 1.400C3.200 .2 6 .6 6 2.800C6 4.400 5 5 4.200 5.400C3.800 6.800 4 8.400 4.600 9.400C6.200 8.800 8.400 9.400 8.600 11C8.800 13.200 6 14.400 3.600 14C.8 13.400 .2 10 .2 7C.2 4.600 .6 2.400 1.600 1.400Z" fill="url(#g54)" stroke="#6a70b4" stroke-width=".5"/><circle cx="3.400" cy="2.800" r="1.500" fill="#c8ccf0" opacity=".8"/><ellipse cx="6" cy="11.200" rx="1.800" ry="1.300" fill="#c8ccf0" opacity=".8"/><path d="M6.400 2.800L8.200 1.800M6.600 4.400L8.600 4.400M6 1.400L7.200 .2" stroke="#9aa0d4" stroke-width=".7"/><path d="M2.500 14.200H15.500" stroke="#9c9cb8" stroke-width="1.200" opacity=".8"/></svg>
<div style="left:8px;top:314px;width:29px;height:21px;background:linear-gradient(#e8f4fd,#dcf0fc 50%,#c4e4fa 50%,#b4dcf6);border:1px solid #3c7fb1;border-radius:3px;box-shadow:inset 0 0 0 1px rgba(255,255,255,.7);"></div>
<svg style="left:12px;top:318px" width="14.5" height="14.5" viewBox="0 0 14.5 14.5"><defs><linearGradient id="g55" x1="0" y1="0" x2="0" y2="1"><stop offset="0" stop-color="#58b4ec"/><stop offset="1" stop-color="#2a90d8"/></linearGradient><linearGradient id="g56" x1="0" y1="0" x2="0" y2="1"><stop offset="0" stop-color="#7468c8"/><stop offset="1" stop-color="#5a4cb4"/></linearGradient><linearGradient id="g57" x1="0" y1="0" x2="1" y2="1"><stop offset="0" stop-color="#fff0a0"/><stop offset="1" stop-color="#f4a830"/></linearGradient></defs><path d="M.4 4.900L6.700 .2L7.400 .8V13.700H.4Z" fill="#3a9ce0" stroke="#1c7cc8" stroke-width=".5"/><path d="M2.200 4.600L6.900 1.400V7.600L2.600 6.400Z" fill="url(#g57)"/><path d="M.5 5.200L7.400 8.400V13.600H.5Z" fill="url(#g55)"/><path d="M.6 13.500L7.300 8.500" stroke="#a4dcf8" stroke-width=".7"/><path d="M7.400 2.800Q7.400 1.800 8.400 1.800H8.800V1H9.800V1.800H12.800Q13.800 1.800 13.800 2.800V13Q13.800 14 12.800 14H8.400Q7.400 14 7.400 13Z" fill="url(#g56)" stroke="#4a3ea4" stroke-width=".5"/><rect x="8.400" y="3.200" width="4.500" height="4.800" fill="#f4f8ff"/><rect x="8.400" y="4.800" width="4.500" height="1.700" fill="#3a98ec"/><path d="M8.700 10.100H12.700M8.700 12.100H12.700M9.800 9V13.200M11.600 9V13.200" stroke="#e4e4f8" stroke-width=".8"/></svg>
<svg style="left:314px;top:315.5px" width="14.5" height="14.5" viewBox="0 0 14.5 14.5"><defs><linearGradient id="g58" x1="0" y1="0" x2="0" y2="1"><stop offset="0" stop-color="#58b4ec"/><stop offset="1" stop-color="#2a90d8"/></linearGradient><linearGradient id="g59" x1="0" y1="0" x2="0" y2="1"><stop offset="0" stop-color="#7468c8"/><stop offset="1" stop-color="#5a4cb4"/></linearGradient><linearGradient id="g60" x1="0" y1="0" x2="1" y2="1"><stop offset="0" stop-color="#fff0a0"/><stop offset="1" stop-color="#f4a830"/></linearGradient></defs><path d="M.4 4.900L6.700 .2L7.400 .8V13.700H.4Z" fill="#3a9ce0" stroke="#1c7cc8" stroke-width=".5"/><path d="M2.200 4.600L6.900 1.400V7.600L2.600 6.400Z" fill="url(#g60)"/><path d="M.5 5.200L7.400 8.400V13.600H.5Z" fill="url(#g58)"/><path d="M.6 13.500L7.300 8.500" stroke="#a4dcf8" stroke-width=".7"/><path d="M7.400 2.800Q7.400 1.800 8.400 1.800H8.800V1H9.800V1.800H12.800Q13.800 1.800 13.800 2.800V13Q13.800 14 12.800 14H8.400Q7.400 14 7.400 13Z" fill="url(#g59)" stroke="#4a3ea4" stroke-width=".5"/><rect x="8.400" y="3.200" width="4.500" height="4.800" fill="#f4f8ff"/><rect x="8.400" y="4.800" width="4.500" height="1.700" fill="#3a98ec"/><path d="M8.700 10.100H12.700M8.700 12.100H12.700M9.800 9V13.200M11.600 9V13.200" stroke="#e4e4f8" stroke-width=".8"/></svg>
<span class="t" style="left:18.35px;top:340.00px;font-size:11.5px;color:#000;transform:scaleX(0.8903);">Preferred Communication:</span>
<div style="left:144.5px;top:336px;width:59px;height:20px;background:#fff;border:1px solid #d4deec;border-radius:2px;"></div>
<svg style="left:193.2px;top:344.3px" width="6.6" height="3.8" viewBox="0 0 6.6 3.8"><path d="M0 0H6.6L3.3 3.8Z" fill="#000"/></svg>
<span class="t" style="left:215.10px;top:340.00px;font-size:11.5px;color:#000;transform:scaleX(0.9198);">Language:</span>
<div style="left:272.5px;top:336px;width:74.5px;height:20px;background:#fff;border:1px solid #d4deec;border-radius:2px;"></div>
<span class="t" style="left:275.10px;top:340.00px;font-size:11.5px;color:#000;transform:scaleX(0.9014);">English</span>
<svg style="left:335.3px;top:344.3px" width="7.4" height="4" viewBox="0 0 7.4 4"><path d="M0 0H7.4L3.7 4Z" fill="#000"/></svg>
<span class="t" style="left:425.50px;top:128.00px;font-size:11.5px;color:#000;transform:scaleX(0.8939);">Status:</span>
<div style="left:463px;top:125px;width:102px;height:43px;background:#0080ff;border:1px solid #5e5e5e;"></div>
<span class="t" style="left:489.60px;top:127.70px;font-size:11.5px;color:#00082c;transform:scaleX(0.9194);">MEDICAL</span>
<div style="left:566px;top:124px;width:66px;height:22px;background:linear-gradient(#f4f4f4,#ececec 50%,#dfdfdf 50%,#d3d3d3);border:1px solid #777;border-radius:3px;box-shadow:inset 0 0 0 1px rgba(255,255,255,.85);"></div>
<svg style="left:569.5px;top:126.5px" width="15" height="15" viewBox="0 0 15 15"><defs><radialGradient id="g61" cx="0.4" cy="0.35" r="0.7"><stop offset="0" stop-color="#f4fbff"/><stop offset="1" stop-color="#a8d0f2"/></radialGradient></defs><g transform="scale(0.9375)"><path d="M7.200 9.200L1.600 14.800" stroke="#c08a10" stroke-width="3.600" stroke-linecap="round"/><path d="M7.200 9.200L1.600 14.800" stroke="#f4c430" stroke-width="2.200" stroke-linecap="round"/><circle cx="10" cy="5.800" r="4.900" fill="url(#g61)" stroke="#9aa4b0" stroke-width="1.300"/></g></svg>
<span class="t" style="left:587.10px;top:129.00px;font-size:11.5px;color:#000;transform:scaleX(0.9309);">Change</span>
<div style="left:566px;top:147px;width:66px;height:22px;background:linear-gradient(#f4f4f4,#ececec 50%,#dfdfdf 50%,#d3d3d3);border:1px solid #777;border-radius:3px;box-shadow:inset 0 0 0 1px rgba(255,255,255,.85);"></div>
<svg style="left:569.5px;top:150px" width="15" height="15" viewBox="0 0 15 15"><defs><radialGradient id="g62" cx="0.45" cy="0.3" r="0.75"><stop offset="0" stop-color="#8cd0fc"/><stop offset="0.55" stop-color="#2a90e4"/><stop offset="1" stop-color="#0c5cb0"/></radialGradient></defs><circle cx="7.500" cy="7.500" r="7" fill="url(#g62)" stroke="#e8f4ff" stroke-width=".8"/><circle cx="7.500" cy="7.500" r="7.400" fill="none" stroke="#5a9cd8" stroke-width=".5"/><circle cx="7.500" cy="3.800" r="1.200" fill="#fff"/><rect x="6.500" y="5.800" width="2" height="6" fill="#fff"/></svg>
<span class="t" style="left:593.60px;top:151.50px;font-size:11.5px;color:#000;transform:scaleX(0.8664);">History</span>
<span class="t" style="left:413.50px;top:178.00px;font-size:11.5px;color:#000;transform:scaleX(0.9059);">Collector:</span>
<div style="left:462.5px;top:173.5px;width:170px;height:19px;background:#fff;border:1px solid #abadb3;"></div>
<span class="t" style="left:468.90px;top:176.50px;font-size:12px;color:#000;transform:scaleX(0.9418);">Sara McMillan (smcmillan)</span>
<svg style="left:608px;top:176.3px" width="21" height="13" viewBox="0 0 21 13"><defs><linearGradient id="g63" x1="0" y1="0" x2="0" y2="1"><stop offset="0" stop-color="#f6f6f6"/><stop offset="0.5" stop-color="#e8e8e8"/><stop offset="0.5" stop-color="#dcdcdc"/><stop offset="1" stop-color="#d0d0d0"/></linearGradient></defs><rect x=".5" y=".5" width="20" height="12" rx="2.500" fill="url(#g63)" stroke="#7e7e7e" stroke-width="1"/><defs><radialGradient id="g64" cx="0.4" cy="0.35" r="0.7"><stop offset="0" stop-color="#f4fbff"/><stop offset="1" stop-color="#a8d0f2"/></radialGradient></defs><path d="M11.1 7.3L6.9 10.8" stroke="#e0a820" stroke-width="1.800" stroke-linecap="round"/><circle cx="12.9" cy="5.1" r="3.100" fill="url(#g64)" stroke="#a0a8b4" stroke-width=".8"/></svg>
<span class="t" style="left:415.10px;top:214.75px;font-size:11.5px;color:#000;transform:scaleX(0.9170);">Location:</span>
<div style="left:463px;top:212px;width:101.5px;height:19px;background:#fff;border:1px solid #ccd6e3;border-radius:2px;"></div>
<svg style="left:553px;top:219.6px" width="7.2" height="4" viewBox="0 0 7.2 4"><path d="M0 0H7.2L3.6 4Z" fill="#000"/></svg>
<span class="t" style="left:398.50px;top:235.00px;font-size:11.5px;color:#000;transform:scaleX(0.9109);">Sales Agent:</span>
<div style="left:463px;top:231.5px;width:169.5px;height:18.5px;background:#fff;border:1px solid #abadb3;"></div>
<svg style="left:585px;top:234.6px" width="21.5" height="12.7" viewBox="0 0 21.5 12.7"><defs><linearGradient id="g65" x1="0" y1="0" x2="0" y2="1"><stop offset="0" stop-color="#f6f6f6"/><stop offset="0.5" stop-color="#e8e8e8"/><stop offset="0.5" stop-color="#dcdcdc"/><stop offset="1" stop-color="#d0d0d0"/></linearGradient></defs><rect x=".5" y=".5" width="20.5" height="11.7" rx="2.500" fill="url(#g65)" stroke="#7e7e7e" stroke-width="1"/><defs><radialGradient id="g66" cx="0.4" cy="0.35" r="0.7"><stop offset="0" stop-color="#f4fbff"/><stop offset="1" stop-color="#a8d0f2"/></radialGradient></defs><path d="M11.35 7.1499999999999995L7.15 10.5" stroke="#e0a820" stroke-width="1.800" stroke-linecap="round"/><circle cx="13.15" cy="4.949999999999999" r="3.100" fill="url(#g66)" stroke="#a0a8b4" stroke-width=".8"/></svg>
<svg style="left:608px;top:234.6px" width="21" height="12.7" viewBox="0 0 21 12.7"><defs><linearGradient id="g67" x1="0" y1="0" x2="0" y2="1"><stop offset="0" stop-color="#f6f6f6"/><stop offset="0.5" stop-color="#e8e8e8"/><stop offset="0.5" stop-color="#dcdcdc"/><stop offset="1" stop-color="#d0d0d0"/></linearGradient></defs><rect x=".5" y=".5" width="20" height="11.7" rx="2.500" fill="url(#g67)" stroke="#7e7e7e" stroke-width="1"/><circle cx="10.5" cy="6.35" r="4.300" fill="#c4c4c4" stroke="#a4a4a4" stroke-width=".8"/><path d="M7.7 9.149999999999999L13.3 3.55" stroke="#e8e8e8" stroke-width="1.600"/></svg>
<span class="t" style="left:407.50px;top:253.00px;font-size:11.5px;color:#000;transform:scaleX(0.9169);">Start Date:</span>
<div style="left:463px;top:250.4px;width:169.5px;height:18.6px;background:#fff;border:1px solid #abadb3;"></div>
<span class="t" style="left:468.60px;top:253.60px;font-size:11.5px;color:#000;transform:scaleX(0.9343);">7/1/2011 12:00 AM</span>
<svg style="left:608px;top:253px" width="21" height="13" viewBox="0 0 21 13"><defs><linearGradient id="g68" x1="0" y1="0" x2="0" y2="1"><stop offset="0" stop-color="#f6f6f6"/><stop offset="0.5" stop-color="#e8e8e8"/><stop offset="0.5" stop-color="#dcdcdc"/><stop offset="1" stop-color="#d0d0d0"/></linearGradient></defs><rect x=".5" y=".5" width="20" height="12" rx="2.500" fill="url(#g68)" stroke="#7e7e7e" stroke-width="1"/><rect x="5.5" y="2.400" width="10" height="8.2" rx="1" fill="#58b8a8" stroke="#2a8a8a" stroke-width=".6"/><path d="M6.5 5.5H14.5M6.5 7.9H14.5M8.9 4V10M12.1 4V10" stroke="#d8f4f0" stroke-width=".7"/></svg>
<div style="left:381px;top:277px;width:251px;height:82px;background:#fff;"></div>
<span class="t" style="left:679.60px;top:167.20px;font-size:11.5px;color:#000;transform:scaleX(0.7828);">First</span>
<span class="t" style="left:670.50px;top:188.40px;font-size:11.5px;color:#000;transform:scaleX(0.7739);">First</span>
<span class="t" style="left:667.40px;top:231.40px;font-size:11.5px;color:#000;transform:scaleX(0.8543);">Next</span>
<span class="t" style="left:680.40px;top:309.60px;font-size:11.5px;color:#000;transform:scaleX(0.8579);">Pay</span>
<div style="left:0px;top:390px;width:691px;height:207px;background:#fff;border-top:1px solid #898c95;border-left:1px solid #898c95;"></div>
<div style="left:60.5px;top:371px;width:43.5px;height:19.5px;background:linear-gradient(#f3f3f3,#ebebeb 50%,#dcdcdc 50%,#cfcfcf);border:1px solid #898c95;border-bottom:none;"></div>
<span class="t" style="left:64.60px;top:375.50px;font-size:11.5px;color:#000;transform:scaleX(0.9061);">Activity</span>
<div style="left:105.5px;top:371px;width:54px;height:19.5px;background:linear-gradient(#f3f3f3,#ebebeb 50%,#dcdcdc 50%,#cfcfcf);border:1px solid #898c95;border-bottom:none;"></div>
<span class="t" style="left:110.85px;top:375.50px;font-size:11.5px;color:#000;transform:scaleX(0.8984);">Applicant</span>
<div style="left:161.25px;top:371px;width:75px;height:19.5px;background:linear-gradient(#f3f3f3,#ebebeb 50%,#dcdcdc 50%,#cfcfcf);border:1px solid #898c95;border-bottom:none;"></div>
<span class="t" style="left:166.10px;top:375.50px;font-size:11.5px;color:#000;transform:scaleX(0.9102);">Co-applicants</span>
<div style="left:238px;top:371px;width:39.5px;height:19.5px;background:linear-gradient(#f3f3f3,#ebebeb 50%,#dcdcdc 50%,#cfcfcf);border:1px solid #898c95;border-bottom:none;"></div>
<span class="t" style="left:243.10px;top:375.50px;font-size:11.5px;color:#000;transform:scaleX(0.8546);">ACH</span>
<div style="left:279.5px;top:371px;width:71px;height:19.5px;background:linear-gradient(#f3f3f3,#ebebeb 50%,#dcdcdc 50%,#cfcfcf);border:1px solid #898c95;border-bottom:none;"></div>
<span class="t" style="left:285.10px;top:375.50px;font-size:11.5px;color:#000;transform:scaleX(0.9173);">Transactions</span>
<div style="left:353px;top:371px;width:121px;height:19.5px;background:linear-gradient(#f3f3f3,#ebebeb 50%,#dcdcdc 50%,#cfcfcf);border:1px solid #898c95;border-bottom:none;"></div>
<span class="t" style="left:380.10px;top:375.50px;font-size:11.5px;color:#000;transform:scaleX(0.9116);">Payment Schedule</span>
<div style="left:475.5px;top:371px;width:70.5px;height:19.5px;background:linear-gradient(#f3f3f3,#ebebeb 50%,#dcdcdc 50%,#cfcfcf);border:1px solid #898c95;border-bottom:none;"></div>
<span class="t" style="left:481.10px;top:375.50px;font-size:11.5px;color:#000;transform:scaleX(0.9139);">Score Model</span>
<div style="left:548px;top:371px;width:51px;height:19.5px;background:linear-gradient(#f3f3f3,#ebebeb 50%,#dcdcdc 50%,#cfcfcf);border:1px solid #898c95;border-bottom:none;"></div>
<span class="t" style="left:552.35px;top:375.50px;font-size:11.5px;color:#000;transform:scaleX(0.9200);">Contacts</span>
<svg style="left:358px;top:373.5px" width="16" height="15.5" viewBox="0 0 16 15.5"><defs><radialGradient id="g69" cx="0.45" cy="0.35" r="0.7"><stop offset="0" stop-color="#ffe870"/><stop offset="0.7" stop-color="#fcc820"/><stop offset="1" stop-color="#e8a000"/></radialGradient></defs><circle cx="8" cy="7.600" r="7.300" fill="url(#g69)" stroke="#d89a10" stroke-width=".6"/><path d="M8 3V9.400" stroke="#fff" stroke-width="2.200" stroke-linecap="round"/><circle cx="8" cy="12" r="1.200" fill="#fff"/></svg>
<div style="left:0px;top:369px;width:61px;height:22px;background:#fff;border:1px solid #898c95;border-bottom:none;"></div>
<span class="t" style="left:7.60px;top:373.75px;font-size:11.5px;color:#000;transform:scaleX(0.9407);">Accounts</span>
<div style="left:4px;top:391px;width:687px;height:26px;background:linear-gradient(#fdfeff,#edf3fc);"></div>
<span class="t" style="left:7.10px;top:396.50px;font-size:12px;color:#000;transform:scaleX(0.9193);">Select View:</span>
<div style="left:73px;top:393px;width:28.5px;height:21.5px;background:#eaf3fd;border:1px solid #4b97e6;"></div>
<span class="t" style="left:77.85px;top:396.50px;font-size:12px;color:#000;transform:scaleX(0.9371);">List</span>
<span class="t" style="left:107.10px;top:396.50px;font-size:12px;color:#000;transform:scaleX(0.9824);">Contact Plan</span>
<span class="t" style="left:185.60px;top:396.50px;font-size:12px;color:#000;transform:scaleX(0.9406);">Status</span>
<span class="t" style="left:228.85px;top:396.50px;font-size:12px;color:#000;transform:scaleX(0.9767);">Payment</span>
<span class="t" style="left:286.85px;top:396.50px;font-size:12px;color:#000;transform:scaleX(0.9460);">Balance Chg</span>
<span class="t" style="left:363.60px;top:396.50px;font-size:12px;color:#000;transform:scaleX(1.0044);">Priority</span>
<div style="left:411px;top:396px;width:1px;height:16px;background:#7fb2ea;"></div>
<svg style="left:416px;top:396px" width="15" height="15.5" viewBox="0 0 15 15.5"><path d="M.5 .5H7.5L10.5 3.5V14.0H.5Z" fill="#ececec" stroke="#c4c4c4" stroke-width="1" stroke-linejoin="round"/><path d="M7.5 .5V3.5H10.5Z" fill="#eaf4ff" stroke="#c4c4c4" stroke-width=".8" stroke-linejoin="round"/><circle cx="10.200" cy="10.600" r="4.300" fill="#d0d0d0" stroke="#bcbcbc" stroke-width=".5"/><path d="M7.800 10.600h4.800M10.200 8.200v4.800" stroke="#f4f4f4" stroke-width="1.400"/></svg>
<span class="t" style="left:434.85px;top:396.50px;font-size:12px;color:#a8a8a8;transform:scaleX(1.0214);">Add Account</span>
<div style="left:513.5px;top:396px;width:1px;height:16px;background:#7fb2ea;"></div>
<div style="left:517px;top:393px;width:100px;height:21.5px;background:#f4f9ff;border:1px solid #4b97e6;"></div>
<span class="t" style="left:522.35px;top:396.50px;font-size:12px;color:#000;">Debtor Accounts</span>
<div style="left:617px;top:393px;width:80px;height:21.5px;background:#f4f9ff;border:1px solid #4b97e6;"></div>
<span class="t" style="left:622.35px;top:396.50px;font-size:12px;color:#000;transform:scaleX(0.9541);">Fee Accounts</span>
<div style="left:4px;top:417px;width:687px;height:180px;background:#fff;border:1px solid #55a4f5;border-right:none;border-bottom:none;"></div>
<div style="left:5px;top:418px;width:686px;height:23px;background:linear-gradient(#eef4fd,#dbe7f8 50%,#cfdff5);border-bottom:1px solid #b9d0ee;"></div>
<div style="left:6.3px;top:418.8px;width:17px;height:22px;background:linear-gradient(#f4f4f4,#dcdcdc);border:1px solid #707070;border-radius:3px;"></div>
<svg style="left:8px;top:421.5px" width="13.5" height="16" viewBox="0 0 13.5 16"><rect x="3" y="1.300" width="9.800" height="4.200" fill="#b4b4d8"/><rect x="4.400" y="2.200" width="4" height="2.400" fill="#d8d8ee" stroke="#8a8ac0" stroke-width=".5"/><path d="M.5 6.500h5.300v8.600H.5zM.5 9.400h5.300M.5 12.200h5.300" fill="#fbfbff" stroke="#30307c" stroke-width=".8"/><path d="M6 8.300H12.800M6 10.600H12.800" stroke="#30307c" stroke-width=".9"/><path d="M4.600 8.600L7.800 7.600L10.600 3.200" stroke="#1c1c58" stroke-width="1" fill="none"/><path d="M8.800 2.900L11.400 2.200L11.200 4.900Z" fill="#1c1c58"/></svg>
<div style="left:86.5px;top:419px;width:1px;height:21px;background:#c4d7f0;"></div>
<div style="left:87.5px;top:419px;width:1px;height:21px;background:#f6faff;"></div>
<span class="t" style="left:29.10px;top:423.75px;font-size:11.5px;color:#000;transform:scaleX(0.9533);">Creditor ID</span>
<div style="left:197.75px;top:419px;width:1px;height:21px;background:#c4d7f0;"></div>
<div style="left:198.75px;top:419px;width:1px;height:21px;background:#f6faff;"></div>
<span class="t" style="left:93.80px;top:423.75px;font-size:11.5px;color:#000;transform:scaleX(0.9674);">Creditor Product</span>
<div style="left:327.5px;top:419px;width:1px;height:21px;background:#c4d7f0;"></div>
<div style="left:328.5px;top:419px;width:1px;height:21px;background:#f6faff;"></div>
<span class="t" style="left:204.60px;top:423.75px;font-size:11.5px;color:#000;transform:scaleX(0.9545);">Account Number</span>
<div style="left:387px;top:419px;width:1px;height:21px;background:#c4d7f0;"></div>
<div style="left:388px;top:419px;width:1px;height:21px;background:#f6faff;"></div>
<span class="t" style="left:335.30px;top:423.75px;font-size:11.5px;color:#000;transform:scaleX(0.9505);">Balance</span>
<div style="left:473px;top:419px;width:1px;height:21px;background:#c4d7f0;"></div>
<div style="left:474px;top:419px;width:1px;height:21px;background:#f6faff;"></div>
<span class="t" style="left:393.60px;top:423.75px;font-size:11.5px;color:#000;transform:scaleX(0.9470);">Account Status</span>
<div style="left:541.75px;top:419px;width:1px;height:21px;background:#c4d7f0;"></div>
<div style="left:542.75px;top:419px;width:1px;height:21px;background:#f6faff;"></div>
<span class="t" style="left:480.30px;top:423.75px;font-size:11.5px;color:#000;transform:scaleX(0.9488);">Default Pmt</span>
<div style="left:613px;top:419px;width:1px;height:21px;background:#c4d7f0;"></div>
<div style="left:614px;top:419px;width:1px;height:21px;background:#f6faff;"></div>
<span class="t" style="left:548.60px;top:423.75px;font-size:11.5px;color:#000;transform:scaleX(0.9599);">Current Pmt</span>
<span class="t" style="left:620.60px;top:423.75px;font-size:11.5px;color:#000;transform:scaleX(0.9315);">External Agency</span>
<div style="left:23px;top:419px;width:1px;height:21px;background:#c4d7f0;"></div>
<div style="left:5px;top:441px;width:18px;height:18px;background:linear-gradient(#e6effb,#d6e3f6);"></div>
<svg style="left:13px;top:447.5px" width="5" height="8" viewBox="0 0 5 8"><path d="M0 0L4.5 4L0 8Z" fill="#000"/></svg>
<div style="left:23px;top:441.5px;width:668px;height:18px;border:1px solid #1010f0;border-right:none;border-bottom:none;"></div>
<div style="left:5px;top:458.5px;width:686px;height:1px;border-top:1px dotted #1010f0;"></div>
<span class="t" style="left:27.85px;top:442.50px;font-size:11.5px;color:#000;transform:scaleX(0.9186);">4789</span>
<span class="t" style="left:93.80px;top:442.50px;font-size:11.5px;color:#000;transform:scaleX(0.9550);">Dr Haroldson (4789)</span>
<span class="t" style="left:203.60px;top:442.50px;font-size:11.5px;color:#000;transform:scaleX(0.9124);">Account #1</span>
<span class="t" style="left:338.30px;top:442.50px;font-size:11.5px;color:#000;transform:scaleX(0.9382);">$7,155.50</span>
<span class="t" style="left:392.60px;top:442.50px;font-size:11.5px;color:#000;transform:scaleX(0.8745);">OPEN</span>
<span class="t" style="left:502.20px;top:442.50px;font-size:11.5px;color:#000;transform:scaleX(0.9262);">$253.03</span>
<span class="t" style="left:573.50px;top:442.50px;font-size:11.5px;color:#000;transform:scaleX(0.9262);">$253.03</span>
<div style="left:199px;top:462px;width:190px;height:16px;background:#d9d9d9;"></div>
<span class="t" style="left:202.60px;top:463.60px;font-size:11.5px;color:#000;transform:scaleX(0.9404);">1 Accounts</span>
<span class="t" style="left:338.30px;top:463.60px;font-size:11.5px;color:#000;transform:scaleX(0.9382);">$7,155.50</span>
<div style="left:474px;top:462px;width:141px;height:16px;background:#d9d9d9;"></div>
<span class="t" style="left:502.20px;top:463.60px;font-size:11.5px;color:#000;transform:scaleX(0.9262);">$253.03</span>
<span class="t" style="left:573.50px;top:463.60px;font-size:11.5px;color:#000;transform:scaleX(0.9262);">$253.03</span>
<div style="left:199px;top:492px;width:190px;height:46px;background:#d9d9d9;"></div>
<span class="t" style="left:208.20px;top:493.70px;font-size:11.5px;color:#000;transform:scaleX(0.9695);">Total Accounts Balance:</span>
<span class="t" style="left:247.20px;top:508.60px;font-size:11.5px;color:#000;transform:scaleX(0.9702);">Unused Credits:</span>
<span class="t" style="left:220.20px;top:523.30px;font-size:11.5px;color:#000;transform:scaleX(0.9732);">Total Debtor Balance:</span>
<span class="t" style="left:338.30px;top:493.70px;font-size:11.5px;color:#000;transform:scaleX(0.9382);">$7,155.50</span>
<span class="t" style="left:347.80px;top:508.60px;font-size:11.5px;color:#000;transform:scaleX(0.9262);">$298.20</span>
<span class="t" style="left:338.30px;top:523.30px;font-size:11.5px;color:#000;transform:scaleX(0.9382);">$6,857.30</span>
<div style="left:2px;top:306px;width:190.5px;height:60px;border:2px solid #f0781e;border-radius:11px;"></div>
<div style="left:33px;top:340px;width:65px;height:19px;background:linear-gradient(#ffffff,#e6e9f2);border:1px solid #767676;border-radius:3px;box-shadow:1px 1px 2px rgba(0,0,0,.4);"></div>
<span class="t" style="left:39.60px;top:342.50px;font-size:12px;color:#505050;transform:scaleX(0.8716);">Send SMS</span>
<svg style="left:28px;top:323.5px" width="14" height="21.5" viewBox="0 0 13 20"><path d="M.6 .6V16.200L4.200 12.800L6.600 18.400L9 17.400L6.600 11.900H11.600Z" fill="#fff" stroke="#000" stroke-width="1" stroke-linejoin="miter"/></svg>
</div></body></html>
